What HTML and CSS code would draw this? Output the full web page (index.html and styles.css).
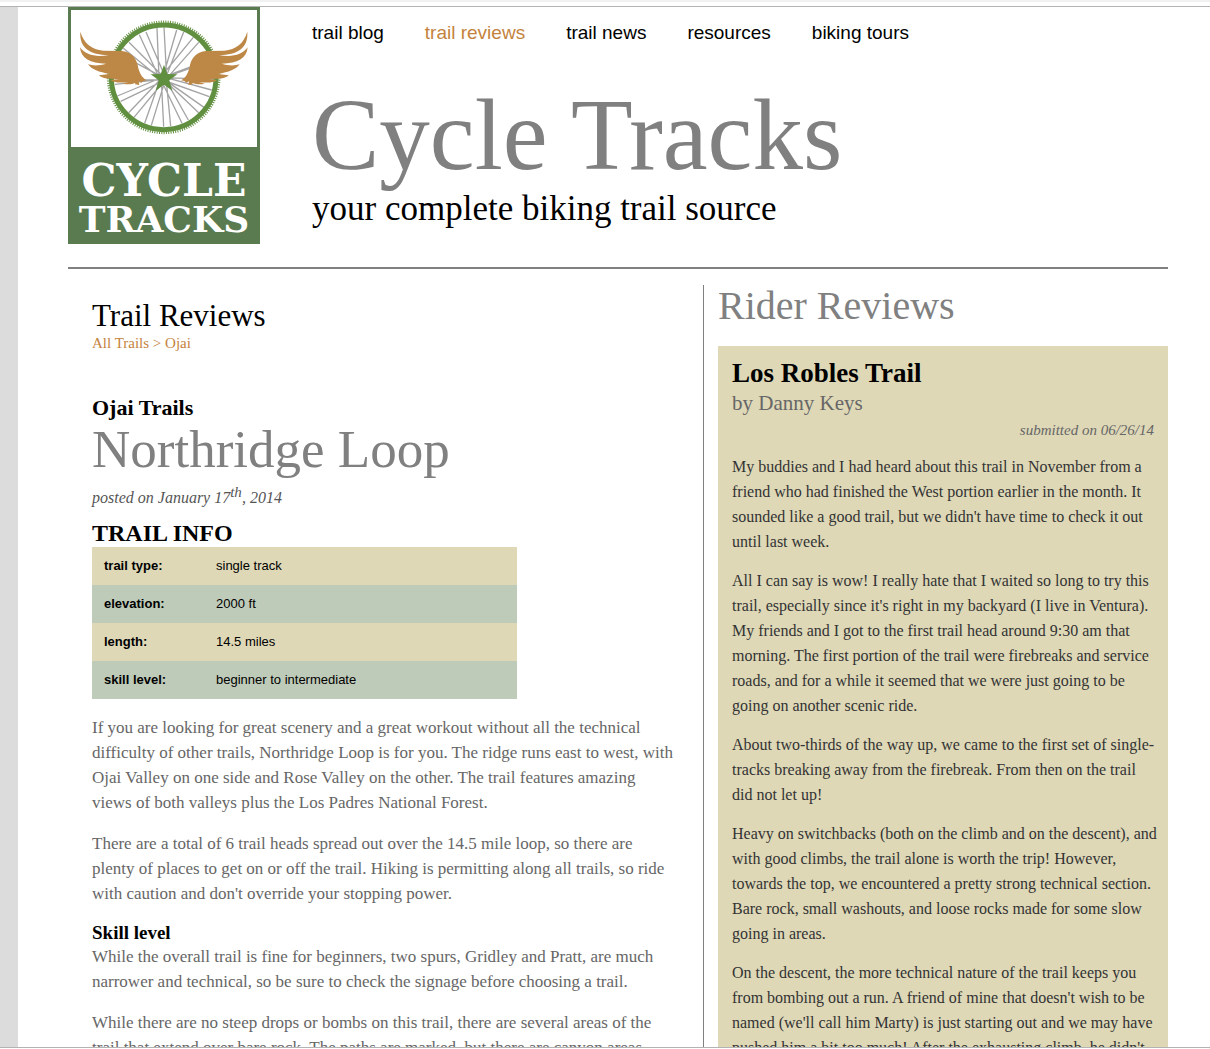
FILE: index.html
```
<!DOCTYPE html>
<html lang="en">
<head>
<meta charset="utf-8">
<title>Cycle Tracks - Trail Reviews</title>
<link rel="stylesheet" href="styles.css">
</head>
<body>
<div class="frame">
<div class="page">
<header class="masthead">
<svg class="logo" viewBox="0 0 192 237" role="img" aria-label="Cycle Tracks logo">
<rect width="192" height="237" fill="#5a7b50"/>
<rect x="3" y="3" width="186" height="137" fill="#fff"/>
<g transform="translate(-68 -7) scale(.33333)">
<g stroke="#a4a4a4" stroke-width="4" fill="none">
<path d="M471 84l6 149M492 82l8 150M530 90l-42 144M551 96l-55 140M580 112l-100 122M596 127L487 250M625 180L480 235M418 104l60 130M438 96l60 140M387 127l110 110M370 145l110 90M410 190l85 45M345 253l150-16M352 288l130-54M362 304l130-62M386 338l100-105M402 352l95-115M434 370l48-137M454 376l43-140M491 380l-7-140M512 378l-14-145M546 370l-66-137M565 360l-70-125M596 338l-110-105M612 322L485 233M628 290l-140-50M635 270l-140-38M640 238l-150-5M570 205l-85 30M410 240h80"/>
</g>
<circle cx="491" cy="232" r="157" fill="none" stroke="#618f40" stroke-width="15"/>
<circle cx="491" cy="232" r="167" fill="none" stroke="#618f40" stroke-width="7" stroke-dasharray="3 4"/>
<path fill="#618f40" d="M492 194L502 222L532 223L508 241L517 272L492 254L467 272L476 241L452 223L482 222Z"/>
<path id="wing" fill="#bd8745" d="M241 95C252 131 275 148 310 152L365 153C392 155 408 172 413 195C416 214 425 234 440 241L430 243L424 248L416 244L418 255L405 253L406 248C395 253 382 254 369 251L386 246C361 249 343 248 331 240L358 237C326 237 308 237 297 226L330 222C296 216 275 209 264 193C280 198 300 197 318 191C270 190 243 176 240 142C256 166 290 172 326 165C270 164 238 145 241 95Z"/>
<use href="#wing" transform="translate(983 0) scale(-1 1)"/>
</g>
<g class="logo-text" text-anchor="middle">
<text x="96" y="189" font-size="44">CYCLE</text>
<text x="96" y="225" font-size="36">TRACKS</text>
</g>
</svg>
<div class="branding">
<nav class="menu">
<a href="#">trail blog</a>
<a href="#" class="current">trail reviews</a>
<a href="#">trail news</a>
<a href="#">resources</a>
<a href="#">biking tours</a>
</nav>
<h1>Cycle Tracks</h1>
<p class="tagline">your complete biking trail source</p>
</div>
</header>
<div class="columns">
<main class="review">
<h2>Trail Reviews</h2>
<p class="crumbs"><a href="#">All Trails</a> &gt; <a href="#">Ojai</a></p>
<article>
<h3 class="region">Ojai Trails</h3>
<h2 class="trail">Northridge Loop</h2>
<p class="posted">posted on January 17<sup>th</sup>, 2014</p>
<table class="info">
<caption>TRAIL INFO</caption>
<tbody>
<tr><th scope="row">trail type:</th><td>single track</td></tr>
<tr><th scope="row">elevation:</th><td>2000 ft</td></tr>
<tr><th scope="row">length:</th><td>14.5 miles</td></tr>
<tr><th scope="row">skill level:</th><td>beginner to intermediate</td></tr>
</tbody>
</table>
<div class="story">
<p>If you are looking for great scenery and a great workout without all the technical difficulty of other trails, Northridge Loop is for you. The ridge runs east to west, with Ojai Valley on one side and Rose Valley on the other. The trail features amazing views of both valleys plus the Los Padres National Forest.</p>
<p>There are a total of 6 trail heads spread out over the 14.5 mile loop, so there are plenty of places to get on or off the trail. Hiking is permitting along all trails, so ride with caution and don't override your stopping power.</p>
<h4>Skill level</h4>
<p>While the overall trail is fine for beginners, two spurs, Gridley and Pratt, are much narrower and technical, so be sure to check the signage before choosing a trail.</p>
<p>While there are no steep drops or bombs on this trail, there are several areas of the trail that extend over bare rock. The paths are marked, but there are canyon areas</p>
</div>
</article>
</main>
<aside class="riders">
<h2>Rider Reviews</h2>
<article class="card">
<h3>Los Robles Trail</h3>
<p class="author">by Danny Keys</p>
<p class="submitted">submitted on 06/26/14</p>
<div class="comment">
<p>My buddies and I had heard about this trail in November from a friend who had finished the West portion earlier in the month. It sounded like a good trail, but we didn't have time to check it out until last week.</p>
<p>All I can say is wow! I really hate that I waited so long to try this trail, especially since it's right in my backyard (I live in Ventura). My friends and I got to the first trail head around 9:30 am that morning. The first portion of the trail were firebreaks and service roads, and for a while it seemed that we were just going to be going on another scenic ride.</p>
<p>About two-thirds of the way up, we came to the first set of single-tracks breaking away from the firebreak. From then on the trail did not let up!</p>
<p>Heavy on switchbacks (both on the climb and on the descent), and with good climbs, the trail alone is worth the trip! However, towards the top, we encountered a pretty strong technical section. Bare rock, small washouts, and loose rocks made for some slow going in areas.</p>
<p>On the descent, the more technical nature of the trail keeps you from bombing out a run. A friend of mine that doesn't wish to be named (we'll call him Marty) is just starting out and we may have pushed him a bit too much! After the exhausting climb, he didn't</p>
</div>
</article>
</aside>
</div>
</div>
</div>
</body>
</html>
```
FILE: styles.css
```
* { box-sizing: border-box; }
body {
  margin: 0;
  height: 100vh;
  padding: 6px 0 1px;
  overflow: hidden;
  background: linear-gradient(#f1f1f1 2px, #fff 2px);
  font-family: Georgia, "Liberation Serif", serif;
  color: #000;
}
h1, h2, h3, h4, p { margin: 0; font-weight: normal; }
a { color: inherit; text-decoration: none; }
.frame {
  height: 100%;
  overflow: hidden;
  border-top: 1px solid #b3b3b3;
  border-bottom: 1px solid #b3b3b3;
  background: #dcdcdc;
  padding-left: 18px;
}
.page { background: #fff; padding: 0 42px 0 50px; }
.masthead {
  display: flex;
  gap: 52px;
  height: 262px;
  border-bottom: 2px solid #808080;
}
.logo { width: 192px; height: 237px; flex: none; }
.logo-text { font-family: "DejaVu Serif", serif; font-weight: bold; fill: #fff; }
.branding { flex: 1; padding-top: 14px; }
.menu {
  display: flex;
  gap: 41px;
  font: 19px/24px Arial, "Liberation Sans", sans-serif;
}
.menu .current { color: #c4833d; }
h1 { margin-top: 38px; font-size: 101px; line-height: 104px; color: #808080; }
.tagline { font-size: 35px; line-height: 44px; }
.columns {
  display: grid;
  grid-template-columns: minmax(0, 636fr) minmax(0, 464fr);
  padding-top: 16px;
}
.review { padding: 14px 14px 0 24px; border-right: 1px solid #808080; }
.review > h2 { font-size: 31px; line-height: 33px; }
.crumbs { font-size: 15px; line-height: 22px; color: #c4833d; }
.region { margin-top: 42px; font-size: 22px; font-weight: bold; line-height: 24px; }
.trail { font-size: 53px; line-height: 58px; color: #808080; }
.posted { margin-top: 8px; font-size: 16px; line-height: 24px; font-style: italic; color: #555; }
.posted sup { line-height: 0; font-size: 15px; }
.info {
  width: 425px;
  margin-top: 10px;
  border-collapse: collapse;
  font: 13px/16px Arial, "Liberation Sans", sans-serif;
}
.info caption {
  text-align: left;
  font: bold 24px/27px "Liberation Serif", serif;
}
.info tr { background: #ded8b7; }
.info tr:nth-child(even) { background: #bfcbb9; }
.info th, .info td { height: 38px; padding: 0 12px; text-align: left; }
.info th { width: 112px; }
.story { padding: 16px 14px 0 0; font-size: 17px; line-height: 25px; color: #666; }
.story p { margin-bottom: 16px; }
h4 { font-size: 19px; font-weight: bold; line-height: 22px; color: #000; }
.riders { padding-left: 14px; }
.riders h2 { font-size: 40px; line-height: 42px; margin-bottom: 19px; color: #808080; }
.card { background: #ded8b7; padding: 14px 8px 0 14px; font-size: 16px; line-height: 25px; color: #333; }
.card h3 { font-size: 27px; font-weight: bold; line-height: 26px; color: #000; }
.card .author { font-size: 21px; line-height: 34px; color: #666; }
.card .submitted { padding-right: 6px; text-align: right; font-size: 15px; line-height: 20px; font-style: italic; color: #666; }
.comment { padding-top: 14px; }
.comment p { margin-bottom: 14px; }
```
